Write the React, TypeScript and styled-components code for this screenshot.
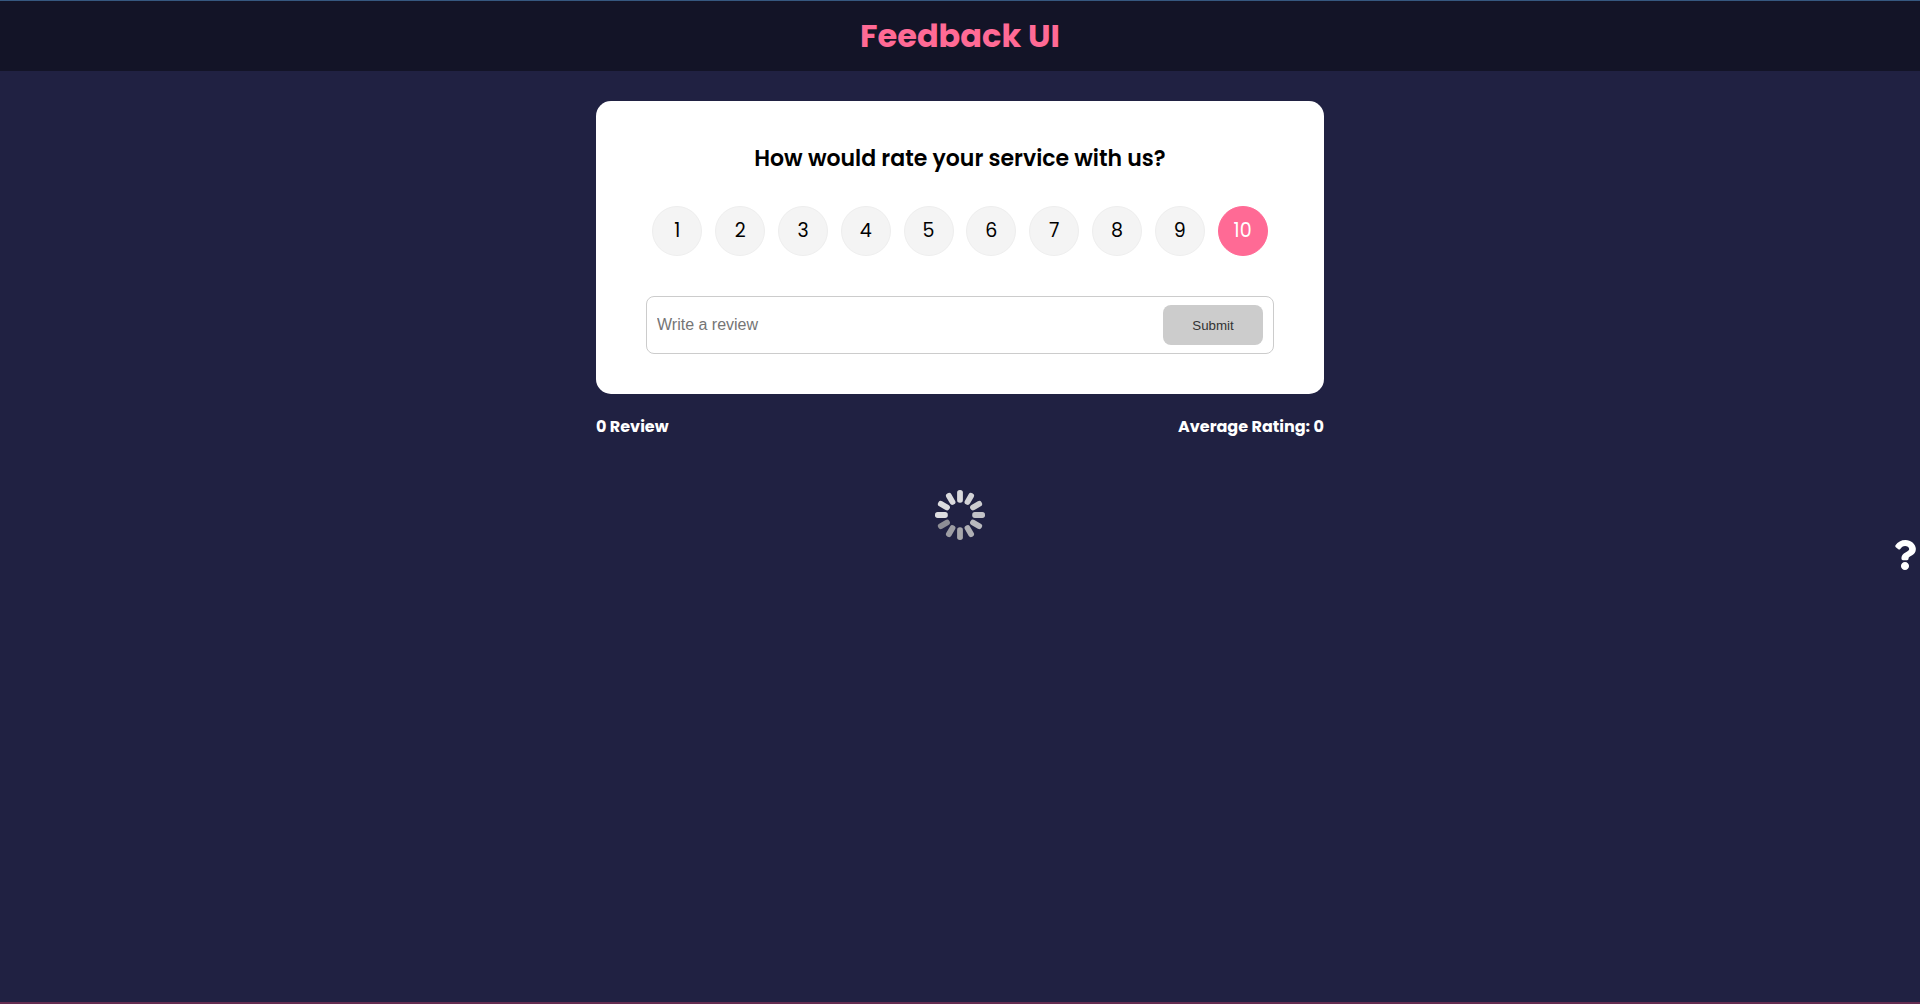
import React, { useState } from "react";
import styled, { createGlobalStyle } from "styled-components";
import { FaQuestion } from "react-icons/fa";

const GlobalStyle = createGlobalStyle`
  * { box-sizing: border-box; }
  body {
    margin: 0;
    background: #202142;
    font-family: Poppins, Inter, "Open Sans", sans-serif;
  }
  h1, h2, h4, p, ul { margin: 0; padding: 0; }
`;

const Page = styled.div`
  display: flex;
  flex-direction: column;
  height: 100vh;
  overflow: hidden;
  border-top: 1px solid #365880;
  border-bottom: 2px solid #642c50;
`;

const Header = styled.header`
  display: flex;
  align-items: center;
  justify-content: center;
  height: 70px;
  flex: none;
  background: #131427;
  color: #ff6a95;
`;

const Title = styled.h1`
  font-size: 32px;
  line-height: 48px;
  font-weight: 700;
`;

const Main = styled.main`
  width: 728px;
  margin: 30px auto 0;
`;

const Card = styled.section`
  height: 293px;
  padding: 41px 50px 40px;
  border-radius: 15px;
  background: #fff;
  color: #000;
`;

const Question = styled.h2`
  font-size: 22px;
  line-height: 33px;
  font-weight: 600;
  text-align: center;
`;

const Ratings = styled.ul`
  display: flex;
  justify-content: space-around;
  margin: 31px 0 40px;
  list-style: none;
`;

const Rating = styled.button<{ $selected: boolean }>`
  width: 50px;
  height: 50px;
  padding: 0;
  border: 1px solid ${(p) => (p.$selected ? "#ff6a95" : "#eee")};
  border-radius: 50%;
  background: ${(p) => (p.$selected ? "#ff6a95" : "#f4f4f4")};
  color: ${(p) => (p.$selected ? "#fff" : "#000")};
  font: 400 19px/48px Poppins, Inter, sans-serif;
`;

const ReviewBox = styled.div`
  display: flex;
  align-items: center;
  height: 58px;
  padding: 8px 10px 8px 8px;
  border: 1px solid #ccc;
  border-radius: 8px;
`;

const ReviewInput = styled.input`
  flex: 1;
  min-width: 0;
  padding: 2px;
  border: 0;
  outline: 0;
  background: transparent;
  font: 16px "Liberation Sans", sans-serif;
  &::placeholder { color: #757575; }
`;

const Submit = styled.button`
  width: 100px;
  height: 40px;
  padding: 0;
  border: 0;
  border-radius: 8px;
  background: #ccc;
  color: #333;
  font: 13.333px "Liberation Sans", sans-serif;
`;

const Stats = styled.div`
  display: flex;
  justify-content: space-between;
  margin-top: 21px;
  color: #fff;
`;

const Stat = styled.h4`
  font-size: 16px;
  line-height: 24px;
  font-weight: 700;
`;

const Spinner = styled.svg`
  display: block;
  width: 50px;
  height: 50px;
  margin: 51px auto 0;
`;

const Help = styled.a`
  position: fixed;
  top: 540px;
  right: 0;
  display: flex;
  color: #fff;
  font-size: 30px;
`;

const spokes = [
  "#d9d9dc", "#d2d2d6", "#cccccf", "#c2c2c6", "#b9b9be", "#b0b0b5",
  "#a6a6ab", "#9d9da3", "#8e8e95", "#dedee1", "#dcdcdf", "#dadadd",
];

export default function App() {
  const [rating, setRating] = useState(10);
  const [text, setText] = useState("");
  return (
    <Page>
      <GlobalStyle />
      <Header>
        <Title>Feedback UI</Title>
      </Header>
      <Main>
        <Card>
          <Question>How would rate your service with us?</Question>
          <Ratings>
            {Array.from({ length: 10 }, (_, i) => i + 1).map((n) => (
              <li key={n}>
                <Rating $selected={n === rating} onClick={() => setRating(n)}>
                  {n}
                </Rating>
              </li>
            ))}
          </Ratings>
          <ReviewBox>
            <ReviewInput
              placeholder="Write a review"
              value={text}
              onChange={(e) => setText(e.target.value)}
            />
            <Submit>Submit</Submit>
          </ReviewBox>
        </Card>
        <Stats>
          <Stat>0 Review</Stat>
          <Stat>Average Rating: 0</Stat>
        </Stats>
        <Spinner viewBox="0 0 50 50">
          {spokes.map((fill, i) => (
            <rect
              key={i}
              x="22.1"
              y="0"
              width="5.8"
              height="12.8"
              rx="2.7"
              fill={fill}
              transform={`rotate(${i * 30} 25 25)`}
            />
          ))}
        </Spinner>
      </Main>
      <Help>
        <FaQuestion />
      </Help>
    </Page>
  );
}
